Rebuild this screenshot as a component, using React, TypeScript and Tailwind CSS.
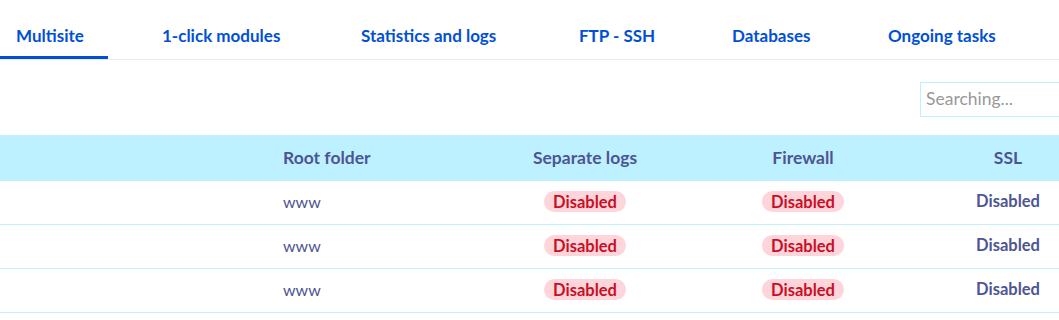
import React from "react";

interface TabProps {
  label: string;
  width: string;
  active?: boolean;
}

const tabs: TabProps[] = [
  { label: "Multisite", width: "w-[146px]", active: true },
  { label: "1-click modules", width: "w-[199px]" },
  { label: "Statistics and logs", width: "w-[218px]" },
  { label: "FTP - SSH", width: "w-[153px]" },
  { label: "Databases", width: "w-[156px]" },
  { label: "Ongoing tasks", width: "w-[180px]" },
];

const rows = [
  { folder: "www" },
  { folder: "www" },
  { folder: "www" },
];

const cols = "grid grid-cols-[267px_209px_218px_218px_192px]";

const Pill = ({ children }: { children: React.ReactNode }) => (
  <span className="inline-flex h-[21px] items-center rounded-full bg-[#ffd5dc] px-[9px] text-[16.5px] font-bold text-[#c90f25]">
    {children}
  </span>
);

export default function App() {
  return (
    <div className="h-[320px] w-[1059px] overflow-hidden bg-white font-['Lato',sans-serif] text-[16px]">
      <div className="w-[1104px]">
        {/* Tabs */}
        <nav className="flex h-[60px] border-b border-[#e5ebf2]">
          {tabs.map(({ label, width, active }) => (
            <div key={label} className={`${width} flex h-[59px] shrink-0`}>
              <button
                className={
                  active
                    ? "flex h-full w-[108px] items-center border-b-[3px] border-[#0050d7] pt-[15px] pl-4 text-[17px] font-bold text-[#0050d7]"
                    : "flex h-full items-center pt-[12px] pl-4 text-[17px] font-bold text-[#0050d7]"
                }
              >
                {label}
              </button>
            </div>
          ))}
        </nav>

        {/* Search */}
        <div className="flex justify-end pt-[22px] pb-[18px]">
          <input
            placeholder="Searching..."
            className="h-[35px] w-[184px] border border-[#bef1ff] px-[5px] pb-[2px] text-[17.5px] text-[#4d5592] outline-none placeholder:text-[#999999]"
          />
        </div>

        {/* Table */}
        <div className={`${cols} h-[46px] items-center bg-[#bef1ff] text-[17.5px] font-bold text-[#4d5592]`}>
          <div />
          <div className="pl-4">Root folder</div>
          <div className="text-center">Separate logs</div>
          <div className="text-center">Firewall</div>
          <div className="text-center">SSL</div>
        </div>
        {rows.map((row, i) => (
          <div
            key={i}
            className={`${cols} h-[44px] items-center border-b border-[#bef1ff] pb-[2px] text-[#4d5592]`}
          >
            <div />
            <div className="pl-4">{row.folder}</div>
            <div className="text-center">
              <Pill>Disabled</Pill>
            </div>
            <div className="text-center">
              <Pill>Disabled</Pill>
            </div>
            <div className="text-center text-[16.5px] font-bold">Disabled</div>
          </div>
        ))}
      </div>
    </div>
  );
}
